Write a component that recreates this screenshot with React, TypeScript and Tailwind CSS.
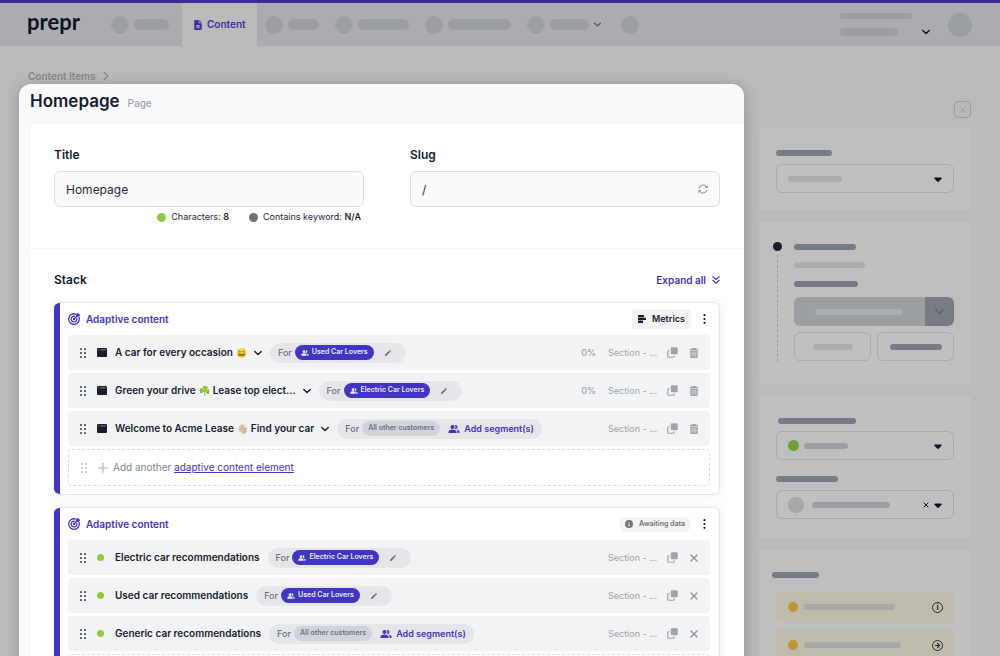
import clsx from "clsx";
import { ArrowRight, ChevronRight, Plus, X } from "lucide-react";
import type { ReactNode } from "react";
import { FaCaretDown, FaCircleInfo, FaFileLines, FaTrashCan } from "react-icons/fa6";
import { MdEdit, MdPeopleAlt } from "react-icons/md";

const fieldClassName =
  "h-9 w-full rounded-md border border-[#dcdee3] bg-[#f9fafc] px-[11px] text-xs text-[#1f2937] focus:border-[#4235c3] focus:outline-none";

const labelClassName = "mb-1.5 block text-xs/5 font-semibold text-[#161d2d]";

type Item = {
  title: string;
  emoji?: string;
  titleEnd?: string;
  segment?: string;
  share?: string;
};

const carItems: Item[] = [
  {
    title: "A car for every occasion",
    emoji: "😀",
    segment: "Used Car Lovers",
    share: "0%",
  },
  {
    title: "Green your drive",
    emoji: "☘️",
    titleEnd: "Lease top elect...",
    segment: "Electric Car Lovers",
    share: "0%",
  },
  {
    title: "Welcome to Acme Lease",
    emoji: "👋🏼",
    titleEnd: "Find your car",
  },
];

const recommendationItems: Item[] = [
  { title: "Electric car recommendations", segment: "Electric Car Lovers" },
  { title: "Used car recommendations", segment: "Used Car Lovers" },
  { title: "Generic car recommendations" },
];

function TargetIcon() {
  return (
    <svg
      viewBox="0 0 24 24"
      className="size-3"
      fill="none"
      stroke="currentColor"
      strokeWidth="2.6"
      strokeLinecap="round"
      strokeLinejoin="round"
    >
      <path d="M15.5 2.1A10.6 10.6 0 1 0 22 8.6" />
      <path d="M13.2 6.4A5.8 5.8 0 1 0 17.7 11" />
      <path d="M12 12l6-6" />
      <path d="M17.6 6.4V3.4L20 1.2v2.8h2.8L20.6 6.4z" fill="currentColor" />
      <circle cx="12" cy="12" r="1" />
    </svg>
  );
}

function GripIcon({ className }: { className?: string }) {
  return (
    <svg viewBox="0 0 6 10" className={clsx("h-2.5 w-1.5", className)} fill="currentColor">
      <rect x="0" y="0" width="2" height="2" rx="0.6" />
      <rect x="4" y="0" width="2" height="2" rx="0.6" />
      <rect x="0" y="4" width="2" height="2" rx="0.6" />
      <rect x="4" y="4" width="2" height="2" rx="0.6" />
      <rect x="0" y="8" width="2" height="2" rx="0.6" />
      <rect x="4" y="8" width="2" height="2" rx="0.6" />
    </svg>
  );
}

function ChevronIcon({ className }: { className?: string }) {
  return (
    <svg
      viewBox="0 0 16 16"
      className={clsx("block", className)}
      fill="none"
      stroke="currentColor"
      strokeWidth="2.8"
      strokeLinecap="round"
      strokeLinejoin="round"
    >
      <path d="M1.5 4.8L8 11.2l6.5-6.4" />
    </svg>
  );
}

function ExpandIcon() {
  return (
    <svg
      viewBox="0 0 16 16"
      className="size-2"
      fill="none"
      stroke="currentColor"
      strokeWidth="2.2"
      strokeLinecap="round"
      strokeLinejoin="round"
    >
      <path d="M1.5 1.5L8 7l6.5-5.5" />
      <path d="M1.5 8.5L8 14.5l6.5-6" />
    </svg>
  );
}

function RefreshIcon() {
  return (
    <svg
      viewBox="0 0 20 20"
      className="size-2.5"
      fill="none"
      stroke="currentColor"
      strokeWidth="1.8"
      strokeLinecap="round"
      strokeLinejoin="round"
    >
      <path d="M2 8a8.3 8.3 0 0 1 15.5-1.5" />
      <path d="M18.5 3.5v3.5h-3.5" />
      <path d="M18 12a8.3 8.3 0 0 1-15.5 1.5" />
      <path d="M1.5 16.5v-3.5h3.5" />
    </svg>
  );
}

function CopyIcon() {
  return (
    <svg viewBox="0 0 22 22" className="size-[11px] text-[#9ca3af]">
      <rect x="7.500" y="0.5" width="14" height="14" rx="2.5" fill="currentColor" />
      <path
        d="M5 7.500H3.500a2 2 0 0 0-2 2v9a2 2 0 0 0 2 2h9a2 2 0 0 0 2-2V17"
        fill="none"
        stroke="currentColor"
        strokeWidth="2.4"
      />
    </svg>
  );
}

function WindowIcon() {
  return (
    <svg viewBox="0 0 20 18" className="h-[9px] w-2.5">
      <rect width="20" height="18" rx="2.4" fill="#161d2d" />
      <path d="M2.5 3.8h2M6.5 3.8h11" stroke="#c9ccd3" strokeWidth="1.2" />
    </svg>
  );
}

function MetricsIcon() {
  return (
    <svg viewBox="0 0 16 16" className="size-2" fill="currentColor">
      <rect x="0" y="0" width="12" height="4.6" rx="1" />
      <rect x="0" y="5.6" width="16" height="4.6" rx="1" />
      <rect x="0" y="11.2" width="10" height="4.6" rx="1" />
    </svg>
  );
}

function MoreIcon() {
  return (
    <svg viewBox="0 0 3 10" className="h-2.5 w-[3px]" fill="currentColor">
      <circle cx="1.5" cy="1.2" r="1.1" />
      <circle cx="1.5" cy="5" r="1.1" />
      <circle cx="1.5" cy="8.8" r="1.1" />
    </svg>
  );
}

function NavPlaceholder({ bar, children }: { bar?: string; children?: ReactNode }) {
  return (
    <span className="flex items-center gap-[5px]">
      <span className="size-[18px] rounded-full bg-[#9b9fa2]" />
      {bar && <span className={clsx("h-[11px] rounded-full bg-[#9b9fa2]", bar)} />}
      {children}
    </span>
  );
}

function Header() {
  return (
    <header className="flex h-[46px] items-stretch border-t-[3px] border-[#372c98] bg-[#ababb0]">
      <a
        href="#"
        className="ml-[27px] w-[84px] font-[Lato,sans-serif] text-[22px]/[38px] font-bold text-[#0d1322]"
      >
        prepr
      </a>
      <nav className="flex items-stretch">
        <NavPlaceholder bar="w-[35px]" />
        <a
          href="#"
          className="ml-[13px] flex items-center gap-1 bg-[#bababa] px-[11px] text-[10px] font-semibold text-[#3b2fa8]"
        >
          <FaFileLines className="size-2.5" />
          Content
        </a>
        <div className="flex items-center gap-4 pl-2">
          <NavPlaceholder bar="w-[31px]" />
          <NavPlaceholder bar="w-[51px]" />
          <NavPlaceholder bar="w-[63px]" />
          <NavPlaceholder bar="w-[39px]">
            <ChevronIcon className="size-[7px] text-[#4b4f58]" />
          </NavPlaceholder>
          <span className="pl-1">
            <NavPlaceholder />
          </span>
        </div>
      </nav>
      <div className="mr-7 ml-auto flex items-center">
        <div className="w-[72px] space-y-[9px]">
          <div className="h-1.5 rounded-full bg-[#9b9fa2]" />
          <div className="h-2 w-[58px] rounded-full bg-[#9b9fa2]" />
        </div>
        <button type="button" aria-label="Account menu" className="mt-3.5 ml-2.5">
          <ChevronIcon className="size-2 text-[#0d1322]" />
        </button>
        <div className="ml-[18px] size-6 rounded-full bg-[#9b9fa2]" />
      </div>
    </header>
  );
}

function Audience({ segment }: { segment?: string }) {
  return (
    <div className="ml-2 flex h-5 shrink-0 items-center rounded-full bg-[#e5e6ea] px-2 text-[9px] font-medium text-[#6b7280]">
      <span className="mr-[3px]">For</span>
      {segment ? (
        <>
          <span className="flex h-[15px] items-center gap-[3px] rounded-full bg-[#4235c3] px-1.5 text-[7px] font-semibold text-[#eceafd]">
            <MdPeopleAlt className="size-2" />
            {segment}
          </span>
          <button type="button" aria-label="Edit segment" className="mr-1.5 ml-2.5">
            <MdEdit className="size-2" />
          </button>
        </>
      ) : (
        <>
          <span className="flex h-[15px] items-center rounded-full bg-[#d1d3da] px-1.5 text-[7px] font-semibold">
            All other customers
          </span>
          <button
            type="button"
            className="ml-2 flex items-center gap-1 text-[9px] font-semibold text-[#4235c3]"
          >
            <MdPeopleAlt className="size-3" />
            Add segment(s)
          </button>
        </>
      )}
    </div>
  );
}

function ItemRow({ item, live }: { item: Item; live?: boolean }) {
  return (
    <li className="flex h-[35px] items-center rounded bg-[#f2f3f5] pr-2.5 pl-3">
      <GripIcon className="text-[#5b6270]" />
      <span className="ml-[11px] flex w-[18px] shrink-0 items-center">
        {live ? <span className="size-[7px] rounded-full bg-[#8fcc3c]" /> : <WindowIcon />}
      </span>
      <span className="flex shrink-0 items-center gap-[3px] text-[10px] font-semibold text-[#161d2d]">
        {item.title}
        {item.emoji && <span className="w-[11px] text-[9px]">{item.emoji}</span>}
        {item.titleEnd}
      </span>
      {!live && (
        <button type="button" aria-label="Expand item" className="ml-[7px] shrink-0">
          <ChevronIcon className="size-2 text-[#161d2d]" />
        </button>
      )}
      <Audience segment={item.segment} />
      <span className="ml-auto text-[9px] font-medium text-[#9ca3af]">{item.share}</span>
      <span className="ml-3 w-[59px] text-[9px] text-[#9ca3af]">Section - ...</span>
      <button type="button" aria-label="Duplicate item">
        <CopyIcon />
      </button>
      <button type="button" aria-label="Remove item" className="ml-2.5">
        {live ? (
          <X className="size-3 text-[#8b919e]" strokeWidth={2.5} />
        ) : (
          <FaTrashCan className="size-3 p-px text-[#9ca3af]" />
        )}
      </button>
    </li>
  );
}

function AdaptiveCard({
  items,
  status,
  live,
}: {
  items: Item[];
  status: ReactNode;
  live?: boolean;
}) {
  return (
    <article className="overflow-hidden rounded-md border border-l-0 border-[#e6e7eb] bg-white shadow-[0_0_10px_rgba(0,0,0,0.07)]">
      <div className="border-l-[6px] border-[#4235c3] pr-[9px] pb-2 pl-2">
        <div className="flex h-8 items-center">
          <h3 className="flex items-center gap-1.5 text-[10px] font-semibold text-[#4235c3]">
            <TargetIcon />
            Adaptive content
          </h3>
          <div className="mr-3 ml-auto">{status}</div>
          <button type="button" aria-label="More options" className="mr-1 text-[#161d2d]">
            <MoreIcon />
          </button>
        </div>
        <ul className="space-y-[3px]">
          {items.map((item) => (
            <ItemRow key={item.title} item={item} live={live} />
          ))}
        </ul>
        <div className="mt-[3px] flex h-[37px] items-center rounded border border-dashed border-[#d9dbdf] pl-3 text-[10px] text-[#7d8390]">
          <GripIcon className="text-[#c9ccd2]" />
          {!live && (
            <>
              <Plus className="mr-0.5 ml-2 size-4 text-[#b4b8c0]" strokeWidth={1.8} />
              <span>
                Add another{" "}
                <a href="#" className="text-[#4235c3] underline">
                  adaptive content element
                </a>
              </span>
            </>
          )}
        </div>
      </div>
    </article>
  );
}

function Editor() {
  return (
    <main className="min-w-0 flex-1 pt-5">
      <nav className="ml-[9px] flex h-[18px] items-center gap-[3px] pt-0.5 text-[10px] font-semibold text-[#82858d]">
        <a href="#">Content items</a>
        <ChevronRight className="size-3.5" strokeWidth={2.2} />
      </nav>
      <div className="min-h-screen rounded-xl bg-[#f9fafc] pl-[11px] shadow-[0_2px_14px_rgba(0,0,0,0.22)]">
        <div className="flex h-10 items-baseline gap-2 pt-[3px]">
          <h1 className="text-[17px]/7 font-semibold text-[#161d2d]">Homepage</h1>
          <span className="text-[10px] font-medium text-[#9ca3af]">Page</span>
        </div>

        <div className="rounded-tl bg-white shadow-[0_0_5px_rgba(0,0,0,0.03)]">
          <form className="grid grid-cols-2 gap-[46px] border-b border-[#f5f6f8] px-6 pt-[21px] pb-[21px]">
            <div>
              <label htmlFor="title" className={labelClassName}>
                Title
              </label>
              <input id="title" type="text" defaultValue="Homepage" className={fieldClassName} />
              <div className="flex items-center justify-end gap-5 pr-[3px] text-[9px]/5 text-[#1f2937]">
                <span className="flex items-center gap-[5px]">
                  <span className="size-[9px] rounded-full bg-[#8fcc3c]" />
                  <span>
                    Characters: <b className="font-semibold">8</b>
                  </span>
                </span>
                <span className="flex items-center gap-[5px]">
                  <span className="size-[9px] rounded-full bg-[#6b7280]" />
                  <span>
                    Contains keyword: <b className="font-semibold">N/A</b>
                  </span>
                </span>
              </div>
            </div>
            <div>
              <label htmlFor="slug" className={labelClassName}>
                Slug
              </label>
              <div className="relative">
                <input id="slug" type="text" defaultValue="/" className={fieldClassName} />
                <button
                  type="button"
                  aria-label="Regenerate slug"
                  className="absolute inset-y-0 right-3 text-[#7d8390]"
                >
                  <RefreshIcon />
                </button>
              </div>
            </div>
          </form>

          <section className="px-6 pt-[21px]">
            <div className="mb-3 flex items-center justify-between">
              <h2 className="text-xs/5 font-semibold text-[#161d2d]">Stack</h2>
              <button
                type="button"
                className="flex items-center gap-1.5 text-[10px] font-semibold text-[#4235c3]"
              >
                Expand all
                <ExpandIcon />
              </button>
            </div>
            <div className="space-y-3">
              <AdaptiveCard
                items={carItems}
                status={
                  <button
                    type="button"
                    className="flex h-5 items-center gap-1.5 rounded bg-[#f2f3f5] px-1.5 text-[9px] font-semibold text-[#161d2d]"
                  >
                    <MetricsIcon />
                    Metrics
                  </button>
                }
              />
              <AdaptiveCard
                live
                items={recommendationItems}
                status={
                  <span className="flex h-[15px] items-center gap-1.5 rounded-full bg-[#f2f3f5] px-1.5 text-[7px] font-semibold text-[#6b7280]">
                    <FaCircleInfo className="size-2" />
                    Awaiting data
                  </span>
                }
              />
            </div>
          </section>
        </div>
      </div>
    </main>
  );
}

function Bar({ className }: { className: string }) {
  return <div className={clsx("h-1.5 rounded-full", className)} />;
}

function SkeletonSelect({ label, children }: { label: string; children: ReactNode }) {
  return (
    <div className="relative h-[29px]">
      <select
        aria-label={label}
        className="size-full appearance-none rounded-md border border-[#a7a9ad] bg-transparent"
      />
      <div className="pointer-events-none absolute inset-0 flex items-center pr-2.5 pl-3">
        {children}
        <FaCaretDown className="size-3 text-[#0d1322]" />
      </div>
    </div>
  );
}

function Sidebar() {
  return (
    <aside className="w-[212px] shrink-0 pt-[55px]">
      <button
        type="button"
        aria-label="Close sidebar"
        className="ml-auto flex size-[17px] items-center justify-center rounded border border-[#9a9da4] text-[#9a9da4]"
      >
        <X className="size-2.5" />
      </button>

      <div className="mt-2.5 h-[82px] rounded bg-[#bfbfbf] px-[17px] pt-[22px]">
        <Bar className="mb-2 w-14 bg-[#777b84]" />
        <SkeletonSelect label="Language">
          <Bar className="mr-auto w-[54px] bg-[#ababb0]" />
        </SkeletonSelect>
      </div>

      <div className="mt-3 flex h-[162px] gap-3 rounded bg-[#bfbfbf] pt-5 pr-[17px] pl-3.5">
        <div className="flex w-[9px] flex-col items-center gap-1">
          <div className="size-[9px] rounded-full bg-[#161d2d]" />
          <div className="h-[107px] border-l border-dashed border-[#9a9da2]" />
        </div>
        <div className="flex-1 pt-0.5">
          <Bar className="w-[62px] bg-[#757b84]" />
          <Bar className="mt-3 w-[71px] bg-[#ababb0]" />
          <Bar className="mt-[13px] w-16 bg-[#757b84]" />
          <div className="mt-2.5 flex h-[29px] overflow-hidden rounded-md">
            <button
              type="button"
              aria-label="Publish"
              className="flex flex-1 items-center bg-[#9b9fa3] pl-[21px]"
            >
              <Bar className="w-[88px] bg-[#abacb0]" />
            </button>
            <button
              type="button"
              aria-label="Publish options"
              className="flex w-[29px] items-center justify-center bg-[#777b84] text-[#595e68]"
            >
              <ChevronIcon className="size-[9px]" />
            </button>
          </div>
          <div className="mt-1.5 grid grid-cols-2 gap-1.5">
            <button
              type="button"
              aria-label="Preview"
              className="flex h-[29px] items-center justify-center rounded-md border border-[#a9abae]"
            >
              <Bar className="w-10 bg-[#ababb0]" />
            </button>
            <button
              type="button"
              aria-label="Save"
              className="flex h-[29px] items-center justify-center rounded-md border border-[#a9abae]"
            >
              <Bar className="w-[52px] bg-[#777b84]" />
            </button>
          </div>
        </div>
      </div>

      <div className="mt-[11px] h-[143px] rounded bg-[#bfbfbf] px-[17px] pt-[23px]">
        <Bar className="mb-[7px] ml-0.5 w-[78px] bg-[#777b84]" />
        <SkeletonSelect label="Status">
          <span className="mr-[5px] size-[11px] rounded-full bg-[#70a031]" />
          <Bar className="mr-auto w-11 bg-[#9b9fa3]" />
        </SkeletonSelect>
        <Bar className="mt-4 mb-2 w-[62px] bg-[#777b84]" />
        <SkeletonSelect label="Assignee">
          <span className="mr-2 size-4 rounded-full bg-[#a8a8a8]" />
          <Bar className="mr-auto w-[78px] bg-[#9b9fa3]" />
          <X className="mr-0.5 size-2 text-[#0d1322]" strokeWidth={3} />
        </SkeletonSelect>
      </div>

      <div className="mt-3 rounded bg-[#bfbfbf] px-[17px] pt-[22px] pb-6">
        <Bar className="-ml-1 w-[47px] bg-[#777b84]" />
        <ul className="mt-[13px] space-y-1.5 text-[#252a35]">
          <li className="flex h-8 items-center rounded bg-[#bfbcae] pr-[11px] pl-3">
            <span className="mr-1.5 size-2.5 rounded-full bg-[#bd9436]" />
            <Bar className="mr-auto w-[91px] bg-[#a9a9aa]" />
            <span className="flex size-[11px] items-center justify-center rounded-full border border-current text-[8px] font-bold">
              i
            </span>
          </li>
          <li className="flex h-8 items-center rounded bg-[#bfbcae] pr-[11px] pl-3">
            <span className="mr-1.5 size-2.5 rounded-full bg-[#bd9436]" />
            <Bar className="mr-auto w-[97px] bg-[#a9a9aa]" />
            <span className="flex size-[11px] items-center justify-center rounded-full border border-current">
              <ArrowRight className="size-[7px]" strokeWidth={4} />
            </span>
          </li>
        </ul>
      </div>
    </aside>
  );
}

export default function App() {
  return (
    <div className="h-screen overflow-hidden bg-[#bababa] font-[Inter,sans-serif]">
      <Header />
      <div className="flex gap-[15px] pr-[29px] pl-[19px]">
        <Editor />
        <Sidebar />
      </div>
    </div>
  );
}
